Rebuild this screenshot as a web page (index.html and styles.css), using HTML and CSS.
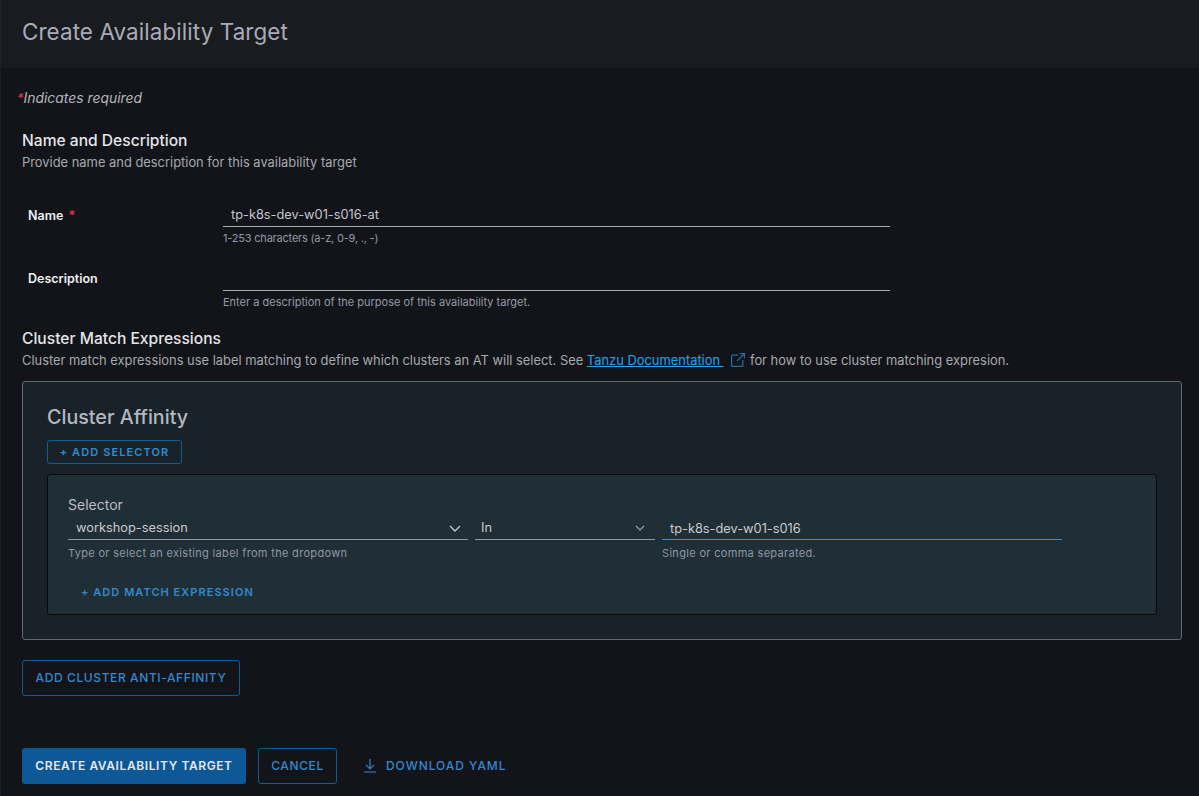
FILE: index.html
```html
<!DOCTYPE html>
<html lang="en">
<head>
    <meta charset="UTF-8">
    <meta name="viewport" content="width=device-width, initial-scale=1.0">
    <title>Create Availability Target</title>
    <link rel="stylesheet" href="styles.css">
</head>
<body>
    <header class="page-header">
        <h1>Create Availability Target</h1>
    </header>

    <main class="content">
        <p class="required-note"><span class="star">*</span>Indicates required</p>

        <h2 class="section-title">Name and Description</h2>
        <p class="section-text">Provide name and description for this availability target</p>

        <div class="form-row row-name">
            <label class="form-label">Name <span class="star star-gap">*</span></label>
            <div class="form-field">
                <div class="line-input">tp-k8s-dev-w01-s016-at</div>
                <div class="hint hint-tight">1-253 characters (a-z, 0-9, ., -)</div>
            </div>
        </div>
        <div class="form-row row-desc">
            <label class="form-label">Description</label>
            <div class="form-field">
                <div class="line-input"></div>
                <div class="hint">Enter a description of the purpose of this availability target.</div>
            </div>
        </div>

        <h2 class="section-title title-cluster">Cluster Match Expressions</h2>
        <p class="section-text">Cluster match expressions use label matching to define which clusters an AT will select. See <a class="doc-link" href="#">Tanzu Documentation&nbsp;</a>
            <svg class="ext-icon" width="14" height="14" viewBox="0 0 14 14" fill="none" stroke="#1f6fa8" stroke-width="1.2">
                <path d="M7 2.1H1.6a1 1 0 0 0-1 1v9.3a1 1 0 0 0 1 1h9.3a1 1 0 0 0 1-1V7"/>
                <path d="M6 8.2 13 1M8.8.7h4.6v4.6"/>
            </svg>
            for how to use cluster matching expresion.</p>

        <section class="affinity-panel">
            <h3 class="panel-title">Cluster Affinity</h3>
            <button class="btn-small">+ ADD SELECTOR</button>
            <div class="selector-box">
                <div class="selector-label">Selector</div>
                <div class="selector-row">
                    <div class="col-key">
                        <div class="line-input select-input">workshop-session
                            <svg width="12" height="7" viewBox="0 0 12 7" fill="none" stroke="#c5cad0" stroke-width="1.3"><path d="M1 1l5 5 5-5"/></svg>
                        </div>
                        <div class="hint">Type or select an existing label from the dropdown</div>
                    </div>
                    <div class="col-op">
                        <div class="line-input select-input select-op">In
                            <svg width="10" height="6" viewBox="0 0 10 6" fill="none" stroke="#9aa3aa" stroke-width="1.2"><path d="M1 1l4 4 4-4"/></svg>
                        </div>
                    </div>
                    <div class="col-val">
                        <div class="line-input line-focus">tp-k8s-dev-w01-s016</div>
                        <div class="hint">Single or comma separated.</div>
                    </div>
                </div>
                <button class="btn-flat">+ ADD MATCH EXPRESSION</button>
            </div>
        </section>

        <button class="btn btn-outline btn-anti">ADD CLUSTER ANTI-AFFINITY</button>

        <div class="actions">
            <button class="btn btn-primary">CREATE AVAILABILITY TARGET</button>
            <button class="btn btn-outline">CANCEL</button>
            <button class="btn btn-link">
                <svg width="14" height="15" viewBox="0 0 14 15" fill="none" stroke="#2f83c7" stroke-width="1.2"><path d="M7 1v9.5M3 6.8l4 4 4-4M1 14h12"/></svg>
                DOWNLOAD YAML
            </button>
        </div>
    </main>
</body>
</html>
```

FILE: styles.css
```css
html, body{
    height: 796px;
    overflow: hidden;
}
body{
    margin: 0;
    background-color: #131419;
    color: #c9ccd3;
    font-family: Inter, "Open Sans", sans-serif;
    border-left: 1px solid #1f2025;
}
button{
    font-family: inherit;
    cursor: pointer;
}

.page-header{
    height: 68px;
    padding-left: 21px;
    display: flex;
    align-items: center;
    background-color: #1a1b20;
}
.page-header h1{
    margin: 0 0 5px;
    font-size: 22.4px;
    font-weight: 400;
    color: #a9abb8;
    letter-spacing: .1px;
}

.content{
    padding: 0 16px 0 21px;
}
.required-note{
    margin: 22px 0 0 -5px;
    height: 16px;
    line-height: 16px;
    font-size: 13.9px;
    font-style: italic;
    color: #b4b6be;
}
.star{
    color: #e2324f;
    font-size: 13px;
}
.star-gap{
    margin-left: 2px;
}
.section-title{
    margin: 25px 0 0;
    font-size: 15.6px;
    line-height: 20px;
    font-weight: 500;
    color: #e3e5ea;
}
.title-cluster{
    margin-top: 20px;
}
.section-text{
    margin: 3px 0 0;
    font-size: 12.9px;
    line-height: 18px;
    color: #a5a8ae;
}
.doc-link{
    color: #22a5ec;
}
.ext-icon{
    margin: 0 1px 0 4px;
    vertical-align: -2px;
}

.form-row{
    display: flex;
}
.row-name{
    margin-top: 30px;
}
.row-desc{
    margin-top: 21px;
}
.form-label{
    width: 201px;
    padding: 4px 0 0 6px;
    box-sizing: border-box;
    font-size: 12.5px;
    line-height: 18px;
    font-weight: 600;
    color: #eceef1;
}
.form-field{
    width: 667px;
}
.line-input{
    height: 25px;
    padding: 0 8px;
    box-sizing: border-box;
    border-bottom: 1px solid #a6a9bb;
    font-size: 12.8px;
    line-height: 26px;
    color: #c3c6cc;
}
.hint{
    margin-top: 5px;
    font-size: 11px;
    line-height: 13px;
    color: #9598a8;
}
.hint-tight{
    letter-spacing: -.2px;
}

.affinity-panel{
    margin-top: 11px;
    width: 1160px;
    height: 259px;
    box-sizing: border-box;
    padding: 22px 24px 0;
    background-color: #182228;
    border: 1px solid #5f696e;
    border-radius: 3px;
}
.panel-title{
    margin: 0;
    font-size: 19.7px;
    line-height: 26px;
    font-weight: 500;
    color: #b4b8c0;
}
.btn-small{
    display: block;
    margin-top: 10px;
    width: 135px;
    height: 24px;
    padding: 0;
    background: none;
    border: 1px solid #0f5c95;
    border-radius: 3px;
    color: #318ad0;
    font-size: 11px;
    font-weight: 600;
    letter-spacing: 1.1px;
}
.selector-box{
    margin-top: 10px;
    width: 1110px;
    height: 141px;
    box-sizing: border-box;
    padding: 21px 20px 0;
    background-color: #202e35;
    border: 1px solid #07090b;
    border-radius: 3px;
}
.selector-label{
    font-size: 14px;
    line-height: 18px;
    color: #b9bdc3;
}
.selector-row{
    margin-top: 2px;
    display: flex;
    gap: 7px;
}
.col-key, .col-val{
    width: 400px;
}
.col-op{
    width: 180px;
}
.selector-row .line-input{
    height: 24px;
    line-height: 24px;
    padding-top: 1px;
    color: #c7cbd0;
}
.select-input{
    display: flex;
    justify-content: space-between;
    align-items: center;
    padding-right: 7px;
    border-bottom-color: #8e99a3;
}
.select-op{
    padding: 0 10px 0 6px;
}
.line-focus{
    border-bottom-color: #3e8ecb;
}
.selector-row .hint{
    margin-top: 7px;
    color: #8f96a6;
    letter-spacing: .32px;
}
.btn-flat{
    display: block;
    margin: 23px 0 0 13px;
    padding: 0;
    background: none;
    border: none;
    color: #318ad0;
    font-size: 11px;
    line-height: 18px;
    font-weight: 600;
    letter-spacing: 1.05px;
}

.btn{
    height: 36px;
    box-sizing: border-box;
    padding: 0 0 2px;
    border-radius: 3px;
    font-size: 12px;
    font-weight: 500;
    letter-spacing: .6px;
}
.btn-outline{
    background: none;
    border: 1px solid #0f5c95;
    color: #318ad0;
}
.btn-anti{
    display: block;
    margin-top: 20px;
    width: 218px;
}
.actions{
    margin-top: 52px;
    display: flex;
    gap: 12px;
}
.btn-primary{
    width: 224px;
    background-color: #0d5896;
    border: none;
    color: #e4e8ec;
    font-weight: 600;
}
.actions .btn-outline{
    width: 79px;
}
.btn-link{
    margin-left: 14px;
    display: flex;
    align-items: center;
    gap: 9px;
    background: none;
    border: none;
    color: #318ad0;
    letter-spacing: .95px;
}
```
